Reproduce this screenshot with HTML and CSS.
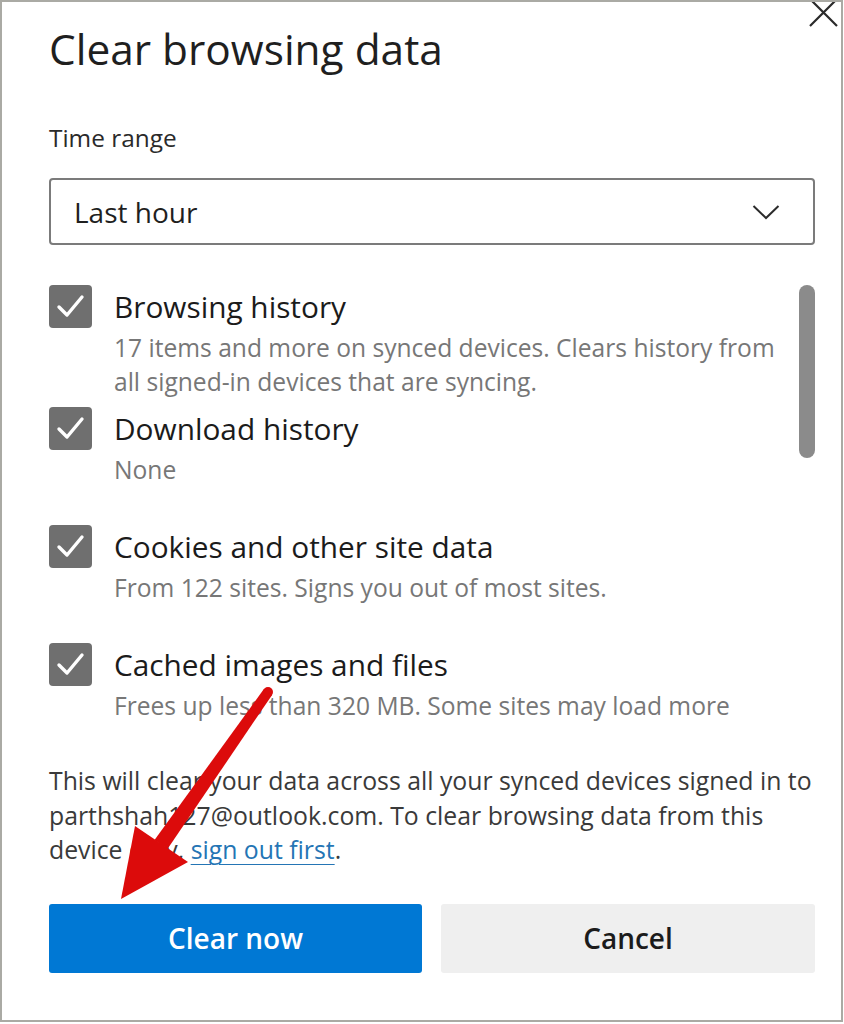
FILE: index.html
```html
<!DOCTYPE html>
<html>
<head>
<meta charset="utf-8">
<link rel="stylesheet" href="styles.css">
</head>
<body>
<div class="frame">
  <svg class="close" width="32" height="30" viewBox="0 0 32 30"><path d="M3 0 L28 25 M26 0 L1 25" stroke="#2b2b2b" stroke-width="2.2" fill="none"/></svg>
  <h1 class="title">Clear browsing data</h1>
  <div class="field-label">Time range</div>
  <div class="select">
    <span class="select-value">Last hour</span>
    <svg class="chev" width="28" height="16" viewBox="0 0 28 16"><path d="M1.5 2 L14 14 L26.5 2" stroke="#2b2b2b" stroke-width="2" fill="none"/></svg>
  </div>
  <div class="list">
    <div class="scrollbar"></div>
    <div class="item">
      <div class="box"><svg width="43" height="43" viewBox="0 0 43 43"><path d="M10 22 L18 30 L33 12" stroke="#fff" stroke-width="3.4" fill="none" stroke-linecap="round" stroke-linejoin="round"/></svg></div>
      <div class="text">
        <div class="label">Browsing history</div>
        <div class="desc">17 items and more on synced devices. Clears history from<br>all signed-in devices that are syncing.</div>
      </div>
    </div>
    <div class="item">
      <div class="box"><svg width="43" height="43" viewBox="0 0 43 43"><path d="M10 22 L18 30 L33 12" stroke="#fff" stroke-width="3.4" fill="none" stroke-linecap="round" stroke-linejoin="round"/></svg></div>
      <div class="text">
        <div class="label">Download history</div>
        <div class="desc">None</div>
      </div>
    </div>
    <div class="item">
      <div class="box"><svg width="43" height="43" viewBox="0 0 43 43"><path d="M10 22 L18 30 L33 12" stroke="#fff" stroke-width="3.4" fill="none" stroke-linecap="round" stroke-linejoin="round"/></svg></div>
      <div class="text">
        <div class="label">Cookies and other site data</div>
        <div class="desc">From 122 sites. Signs you out of most sites.</div>
      </div>
    </div>
    <div class="item last">
      <div class="box"><svg width="43" height="43" viewBox="0 0 43 43"><path d="M10 22 L18 30 L33 12" stroke="#fff" stroke-width="3.4" fill="none" stroke-linecap="round" stroke-linejoin="round"/></svg></div>
      <div class="text">
        <div class="label">Cached images and files</div>
        <div class="desc">Frees up less than 320 MB. Some sites may load more</div>
      </div>
    </div>
  </div>
  <p class="note">This will clear your data across all your synced devices signed in to<br>parthshah127@outlook.com. To clear browsing data from this<br>device only, <a class="link">sign out first</a>.</p>
  <div class="actions">
    <button class="btn primary">Clear now</button>
    <button class="btn secondary">Cancel</button>
  </div>
  <svg class="arrow" width="844" height="1024" viewBox="0 0 844 1024">
    <polygon points="263.9,689.1 272.1,694.9 167.5,849 154.5,840" fill="#dc0b0b"/>
    <circle cx="268" cy="692" r="5" fill="#dc0b0b"/>
    <polygon points="135,826 188,862 121,899" fill="#dc0b0b"/>
  </svg>
</div>
</body>
</html>
```
FILE: styles.css
```css
* { box-sizing: border-box; }
html, body { margin: 0; padding: 0; background: #fff; }
body { font-family: "Open Sans", "Noto Sans", sans-serif; color: #1b1b1b; }

.frame {
  position: relative;
  width: 843px;
  height: 1022px;
  border: 2px solid #aaaaa4;
  padding: 0 26px 0 47px;
  overflow: hidden;
}

.close { position: absolute; left: 807px; top: -1px; }

.title {
  margin: 23px 0 0;
  font-size: 42.4px;
  font-weight: 500;
  line-height: 48px;
  color: #1f1f1f;
}

.field-label {
  margin-top: 49px;
  font-size: 24.4px;
  line-height: 32px;
  color: #2a2a2a;
}

.select {
  margin-top: 24px;
  height: 67px;
  width: 766px;
  border: 2px solid #7b7b7b;
  border-radius: 4px;
  display: flex;
  align-items: center;
  justify-content: space-between;
  padding: 0 33px 0 23px;
}
.select-value { font-size: 28px; color: #1f1f1f; }
.chev { display: block; }

.list {
  position: relative;
  margin-top: 40px;
  width: 766px;
}
.scrollbar {
  position: absolute;
  right: 0;
  top: 0;
  width: 16px;
  height: 173px;
  border-radius: 8px;
  background: #8b8b8b;
}

.item {
  display: flex;
  gap: 22px;
  min-height: 110px;
  margin-bottom: 8px;
}
.item.last { min-height: 0; margin-bottom: 0; }

.box {
  flex: none;
  width: 43px;
  height: 43px;
  border-radius: 4px;
  background: #6f6f6f;
}
.box svg { display: block; }

.label {
  font-size: 29.8px;
  line-height: 43px;
  color: #1b1b1b;
  white-space: nowrap;
}
.desc {
  margin-top: 3px;
  font-size: 24.6px;
  line-height: 34px;
  color: #777777;
  white-space: nowrap;
}

.note {
  margin: 40px 0 0;
  font-size: 24.8px;
  line-height: 34.5px;
  color: #3a3a3a;
  white-space: nowrap;
}
.link {
  color: #2475b5;
  text-decoration: underline;
  text-decoration-thickness: 1px;
  text-underline-offset: 5px;
}

.actions {
  margin-top: 37px;
  display: grid;
  grid-template-columns: 373px 374px;
  gap: 19px;
}
.btn {
  height: 69px;
  border: none;
  border-radius: 3px;
  font-family: "Open Sans", "Noto Sans", sans-serif;
  font-size: 28px;
  font-weight: 600;
}
.primary { background: #0078d4; color: #fff; }
.secondary { background: #efefef; color: #1b1b1b; }

.arrow { position: absolute; left: -2px; top: -2px; pointer-events: none; }
```
